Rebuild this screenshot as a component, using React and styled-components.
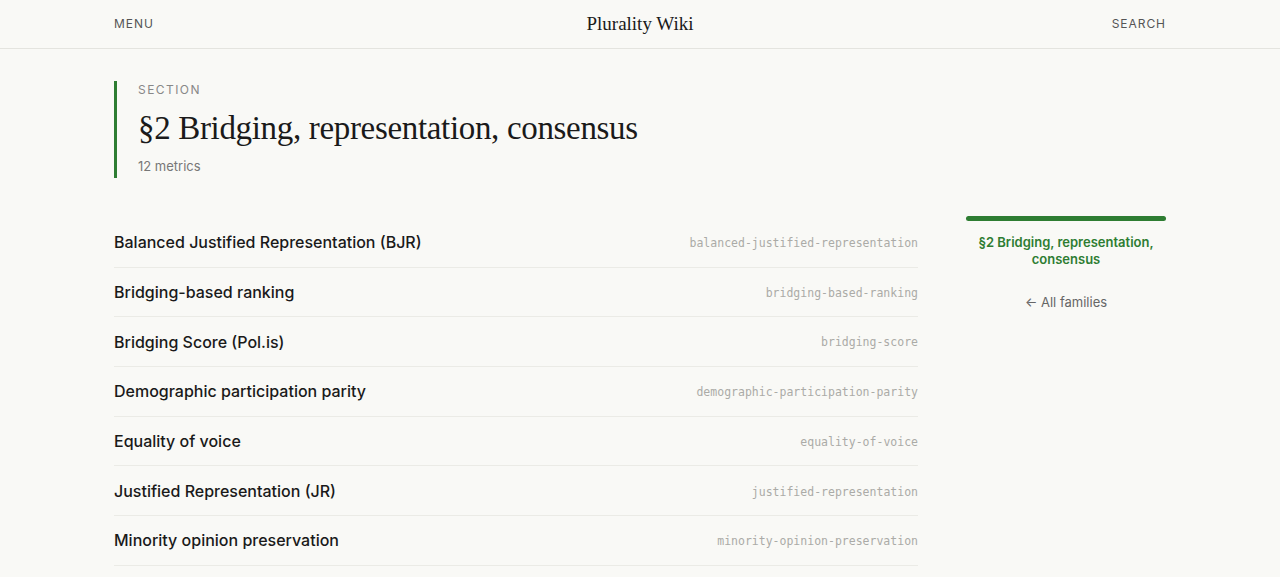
import React from "react";
import styled, { createGlobalStyle } from "styled-components";

const Global = createGlobalStyle`
  html, body {
    margin: 0;
    padding: 0;
    background: #f9f9f6;
  }
  body {
    font-family: Inter, "Noto Sans", sans-serif;
    color: #1a1a1a;
    -webkit-font-smoothing: antialiased;
  }
  * { box-sizing: border-box; }
`;

const GREEN = "#2e7d32";

const TopBar = styled.header`
  height: 49px;
  border-bottom: 1px solid #e4e4df;
  display: grid;
  grid-template-columns: 1fr auto 1fr;
  align-items: center;
  padding: 0 114px;
`;

const NavLink = styled.a`
  font-size: 12px;
  letter-spacing: 0.08em;
  text-transform: uppercase;
  color: #555;
  text-decoration: none;
  justify-self: ${(p) => (p.$end ? "end" : "start")};
  margin-top: -1px;
`;

const Brand = styled.div`
  font-family: "Liberation Serif", "DejaVu Serif", serif;
  font-size: 19px;
  color: #1a1a1a;
`;

const Page = styled.main`
  padding: 32px 114px 0;
`;

const SectionHead = styled.section`
  border-left: 3px solid ${GREEN};
  padding: 2px 0 4px 21px;
  display: flex;
  flex-direction: column;
`;

const Eyebrow = styled.div`
  font-size: 12px;
  letter-spacing: 0.12em;
  text-transform: uppercase;
  color: #888;
  line-height: 14px;
`;

const Title = styled.h1`
  font-family: "Liberation Serif", "DejaVu Serif", serif;
  font-weight: 400;
  font-size: 33px;
  letter-spacing: -0.01em;
  line-height: 40px;
  margin: 11px 0 10px;
  color: #1a1a1a;
`;

const Count = styled.div`
  font-size: 13px;
  color: #777;
  line-height: 16px;
`;

const Body = styled.div`
  display: grid;
  grid-template-columns: 1fr 200px;
  gap: 48px;
  margin-top: 38px;
`;

const List = styled.ul`
  list-style: none;
  margin: 0;
  padding: 2px 0 0;
`;

const Row = styled.li`
  display: flex;
  align-items: center;
  justify-content: space-between;
  height: 49.7px;
  padding: 0;
  border-bottom: 1px solid #ebebe6;
`;

const Name = styled.span`
  font-size: 16px;
  font-weight: 500;
  line-height: 20px;
  color: #1a1a1a;
`;

const Slug = styled.code`
  font-family: "DejaVu Sans Mono", "Liberation Mono", monospace;
  font-size: 11.5px;
  line-height: 1;
  color: #ababa7;
  margin-top: 3px;
`;

const Aside = styled.aside`
  display: flex;
  flex-direction: column;
  align-items: center;
  text-align: center;
`;

const Progress = styled.div`
  width: 100%;
  height: 5px;
  border-radius: 3px;
  background: ${GREEN};
`;

const Current = styled.div`
  margin-top: 13px;
  font-size: 13px;
  font-weight: 600;
  line-height: 17px;
  color: ${GREEN};
  padding: 0 10px;
`;

const Back = styled.a`
  margin-top: 26px;
  font-size: 13px;
  color: #666;
  text-decoration: none;
`;

const metrics = [
  ["Balanced Justified Representation (BJR)", "balanced-justified-representation"],
  ["Bridging-based ranking", "bridging-based-ranking"],
  ["Bridging Score (Pol.is)", "bridging-score"],
  ["Demographic participation parity", "demographic-participation-parity"],
  ["Equality of voice", "equality-of-voice"],
  ["Justified Representation (JR)", "justified-representation"],
  ["Minority opinion preservation", "minority-opinion-preservation"],
];

export default function App() {
  return (
    <>
      <Global />
      <TopBar>
        <NavLink href="#">Menu</NavLink>
        <Brand>Plurality Wiki</Brand>
        <NavLink href="#" $end>Search</NavLink>
      </TopBar>
      <Page>
        <SectionHead>
          <Eyebrow>Section</Eyebrow>
          <Title>§2 Bridging, representation, consensus</Title>
          <Count>12 metrics</Count>
        </SectionHead>
        <Body>
          <List>
            {metrics.map(([name, slug]) => (
              <Row key={slug}>
                <Name>{name}</Name>
                <Slug>{slug}</Slug>
              </Row>
            ))}
          </List>
          <Aside>
            <Progress />
            <Current>§2 Bridging, representation, consensus</Current>
            <Back href="#">← All families</Back>
          </Aside>
        </Body>
      </Page>
    </>
  );
}
